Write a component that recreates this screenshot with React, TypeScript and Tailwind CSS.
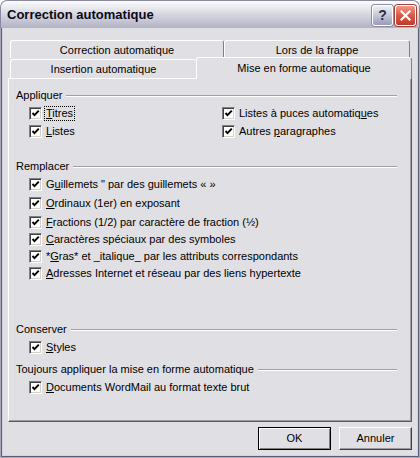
import type { ReactNode } from "react";

function Box() {
  return (
    <span className="flex h-[13px] w-[13px] shrink-0 items-center justify-center border border-t-[#808080] border-l-[#808080] border-r-white border-b-white bg-white shadow-[inset_1px_1px_0_#404040,inset_-1px_-1px_0_#d4d0c8]">
      <svg width="9" height="9" viewBox="0 0 9 9">
        <polyline points="1.5,4 3.5,6.2 7.8,1.6" fill="none" stroke="#000" strokeWidth="1.9" />
      </svg>
    </span>
  );
}

function Check({ children, focus = false }: { children: ReactNode; focus?: boolean }) {
  return (
    <div className="flex items-center">
      <Box />
      <span
        className={
          focus
            ? "ml-[2px] border border-dotted border-black px-[1px] leading-[13px]"
            : "ml-[2px] border border-transparent px-[1px] leading-[13px]"
        }
      >
        {children}
      </span>
    </div>
  );
}

function Header({ children, className = "" }: { children: ReactNode; className?: string }) {
  return (
    <div className={"flex h-[17px] items-center " + className}>
      <span>{children}</span>
      <div className="ml-[4px] h-[2px] flex-1 border-t border-b border-t-[#a0a0a4] border-b-white" />
    </div>
  );
}

export default function App() {
  return (
    <div className="flex h-[458px] w-[420px] flex-col bg-white font-['Liberation_Sans',Arial,sans-serif] text-[11px] text-black">
      {/* title bar */}
      <div className="flex h-[28px] items-center rounded-t-[7px] border-x border-t border-[#8888a0] bg-linear-to-b from-[#fdfdfe] via-[#d6d6e0] to-[#b2b2c6] pl-[6px] pr-[3px] pt-[1px]">
        <span className="flex-1 text-[13px] font-bold text-[#0a0a14]">Correction automatique</span>
        <div className="flex gap-[2px]">
          <div className="flex h-[21px] w-[21px] items-center justify-center rounded-[3px] border border-white bg-linear-to-b from-[#eef0f8] via-[#c4c6da] to-[#9a9cb8] shadow-[0_0_0_1px_#8c8ca4]">
            <span className="text-[14px] font-bold leading-none text-[#2c2c40]">?</span>
          </div>
          <div className="flex h-[21px] w-[21px] items-center justify-center rounded-[3px] border border-white bg-linear-to-b from-[#f09a8c] via-[#d9574a] to-[#c03a2c] shadow-[0_0_0_1px_#a04438]">
            <svg width="11" height="11" viewBox="0 0 11 11">
              <path d="M1.5 1.5 L9.5 9.5 M9.5 1.5 L1.5 9.5" stroke="#fff" strokeWidth="2.2" strokeLinecap="square" />
            </svg>
          </div>
        </div>
      </div>

      {/* window frame */}
      <div className="flex flex-1 border-x border-b border-[#a8a8bc]">
        <div className="flex flex-1 border-x border-b border-[#5e5e78]">
          <div className="flex flex-1 flex-col border-x border-b border-[#d4d4de] bg-[#e0dfe3] px-[5px] pt-[12px]">
            {/* tabs */}
            <div className="flex h-[18px] px-[2px]">
              <div className="flex w-[214px] items-center justify-center rounded-t-[3px] border-t border-l border-r border-t-white border-l-white border-r-[#808080] pt-[1px]">
                Correction automatique
              </div>
              <div className="flex flex-1 items-center justify-center rounded-t-[3px] border-t border-l border-r border-t-white border-l-white border-r-[#808080] pt-[1px]">
                Lors de la frappe
              </div>
            </div>
            <div className="flex h-[20px] items-end">
              <div className="ml-[2px] flex h-[19px] w-[186px] items-center justify-center rounded-t-[3px] border-t border-l border-t-white border-l-white">
                Insertion automatique
              </div>
              <div className="relative z-10 -mb-[1px] flex h-[22px] flex-1 items-center justify-center rounded-t-[3px] border-t border-l border-r border-t-white border-l-white border-r-[#808080] bg-[#e0dfe3]">
                Mise en forme automatique
              </div>
            </div>

            {/* panel */}
            <div className="h-[344px] border border-t-white border-l-white border-r-[#5a5a5a] border-b-[#5a5a5a] pl-[7px] pr-[14px] pt-[8px] shadow-[inset_-1px_-1px_0_#9d9da1]">
              <Header>Appliquer</Header>
              <div className="mt-[1px] flex h-[17px] items-center pl-[13px]">
                <div className="w-[193px]">
                  <Check focus>
                    <u>T</u>itres
                  </Check>
                </div>
                <Check>
                  Listes à puces automatiq<u>u</u>es
                </Check>
              </div>
              <div className="mt-[1px] flex h-[17px] items-center pl-[13px]">
                <div className="w-[193px]">
                  <Check>
                    <u>L</u>istes
                  </Check>
                </div>
                <Check>
                  Autres <u>p</u>aragraphes
                </Check>
              </div>

              <Header className="mt-[18px]">Remplacer</Header>
              <div className="mt-[1px] flex h-[17px] items-center pl-[13px]">
                <Check>
                  G<u>u</u>illemets " par des guillemets « »
                </Check>
              </div>
              <div className="mt-[2px] flex h-[17px] items-center pl-[13px]">
                <Check>
                  <u>O</u>rdinaux (1er) en exposant
                </Check>
              </div>
              <div className="mt-[2px] flex h-[17px] items-center pl-[13px]">
                <Check>
                  <u>F</u>ractions (1/2) par caractère de fraction (½)
                </Check>
              </div>
              <div className="flex h-[17px] items-center pl-[13px]">
                <Check>
                  <u>C</u>aractères spéciaux par des symboles
                </Check>
              </div>
              <div className="flex h-[17px] items-center pl-[13px]">
                <Check>
                  *<u>G</u>ras* et _italique_ par les attributs correspondants
                </Check>
              </div>
              <div className="flex h-[17px] items-center pl-[13px]">
                <Check>
                  <u>A</u>dresses Internet et réseau par des liens hypertexte
                </Check>
              </div>

              <Header className="mt-[39px]">Conserver</Header>
              <div className="mt-[1px] flex h-[17px] items-center pl-[13px]">
                <Check>
                  <u>S</u>tyles
                </Check>
              </div>
              <Header className="mt-[5px]">Toujours appliquer la mise en forme automatique</Header>
              <div className="mt-[1px] flex h-[17px] items-center pl-[13px]">
                <Check>
                  <u>D</u>ocuments WordMail au format texte brut
                </Check>
              </div>
            </div>

            {/* buttons */}
            <div className="mt-[5px] flex justify-end gap-[8px]">
              <button className="h-[23px] w-[73px] border border-black bg-[#e0dfe3] shadow-[inset_1px_1px_0_#fff,inset_-1px_-1px_0_#808080]">
                OK
              </button>
              <button className="h-[23px] w-[73px] border border-t-white border-l-white border-r-[#404040] border-b-[#404040] bg-[#e0dfe3] shadow-[inset_-1px_-1px_0_#9d9da1]">
                Annuler
              </button>
            </div>
          </div>
        </div>
      </div>
    </div>
  );
}
